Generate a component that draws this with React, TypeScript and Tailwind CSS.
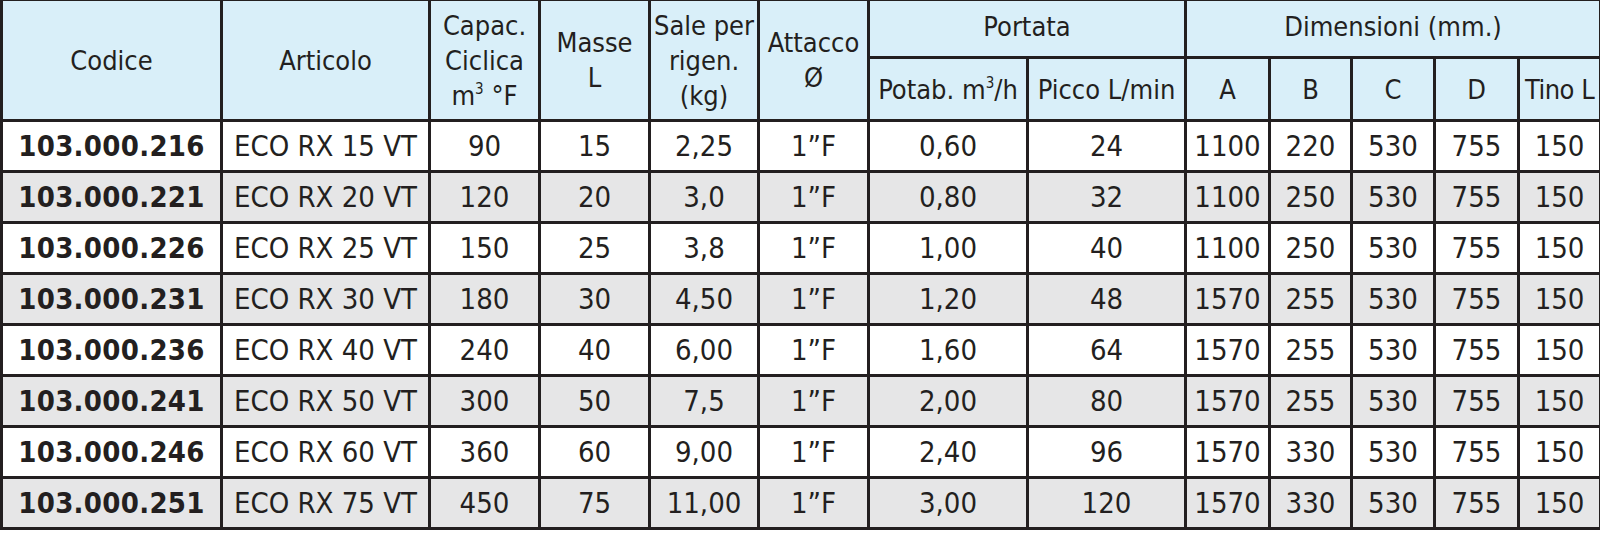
import React from "react"

const rows = [
  ["103.000.216", "ECO RX 15 VT", "90", "15", "2,25", "1”F", "0,60", "24", "1100", "220", "530", "755", "150"],
  ["103.000.221", "ECO RX 20 VT", "120", "20", "3,0", "1”F", "0,80", "32", "1100", "250", "530", "755", "150"],
  ["103.000.226", "ECO RX 25 VT", "150", "25", "3,8", "1”F", "1,00", "40", "1100", "250", "530", "755", "150"],
  ["103.000.231", "ECO RX 30 VT", "180", "30", "4,50", "1”F", "1,20", "48", "1570", "255", "530", "755", "150"],
  ["103.000.236", "ECO RX 40 VT", "240", "40", "6,00", "1”F", "1,60", "64", "1570", "255", "530", "755", "150"],
  ["103.000.241", "ECO RX 50 VT", "300", "50", "7,5", "1”F", "2,00", "80", "1570", "255", "530", "755", "150"],
  ["103.000.246", "ECO RX 60 VT", "360", "60", "9,00", "1”F", "2,40", "96", "1570", "330", "530", "755", "150"],
  ["103.000.251", "ECO RX 75 VT", "450", "75", "11,00", "1”F", "3,00", "120", "1570", "330", "530", "755", "150"],
]

// column widths measured from the reference grid lines
const widths = [220, 208, 110, 110, 109, 110, 159, 158, 84, 82, 83, 84, 82]

const th = "border-[3px] border-[#231f20] bg-[#d9eff9] text-center align-middle font-normal p-0 whitespace-nowrap"
const td = "border-[3px] border-[#231f20] text-center align-middle p-0 h-[51px] whitespace-nowrap"

function Sup({ children }: { children: React.ReactNode }) {
  return <span className="text-[15px] leading-none relative -top-[11px]">{children}</span>
}

export default function App() {
  return (
    <div className="bg-white w-[1600px] h-[533px] overflow-hidden text-[#231f20] [font-family:'DejaVu_Sans_Condensed','Liberation_Sans_Narrow',Roboto,sans-serif]">
      <table className="table-fixed border-collapse w-[1599px] -mt-[2px]">
        <colgroup>
          {widths.map((w, i) => (
            <col key={i} style={{ width: w }} />
          ))}
        </colgroup>
        <thead className="text-[27px] leading-[35px]">
          <tr className="h-[58px]">
            <th rowSpan={2} className={th}>Codice</th>
            <th rowSpan={2} className={th}>Articolo</th>
            <th rowSpan={2} className={th}>
              Capac.<br />Ciclica<br />m<Sup>3</Sup> °F
            </th>
            <th rowSpan={2} className={th}>Masse<br />L</th>
            <th rowSpan={2} className={th}>Sale per<br />rigen.<br />(kg)</th>
            <th rowSpan={2} className={th}>Attacco<br />Ø</th>
            <th colSpan={2} className={th + " pb-[4px]"}>Portata</th>
            <th colSpan={5} className={th + " pb-[4px]"}>Dimensioni (mm.)</th>
          </tr>
          <tr className="h-[63px]">
            <th className={th}>
              Potab. m<Sup>3</Sup>/h
            </th>
            <th className={th}>Picco L/min</th>
            <th className={th}>A</th>
            <th className={th}>B</th>
            <th className={th}>C</th>
            <th className={th}>D</th>
            <th className={th + " tracking-[-0.5px]"}>Tino L</th>
          </tr>
        </thead>
        <tbody className="text-[29px] leading-none">
          {rows.map((r, i) => (
            <tr key={r[0]} className={i % 2 === 1 ? "bg-[#e6e6e7]" : "bg-white"}>
              {r.map((c, j) => (
                <td key={j} className={td + (j === 0 ? " font-bold tracking-[0.3px]" : "")}>
                  {c}
                </td>
              ))}
            </tr>
          ))}
        </tbody>
      </table>
    </div>
  )
}
